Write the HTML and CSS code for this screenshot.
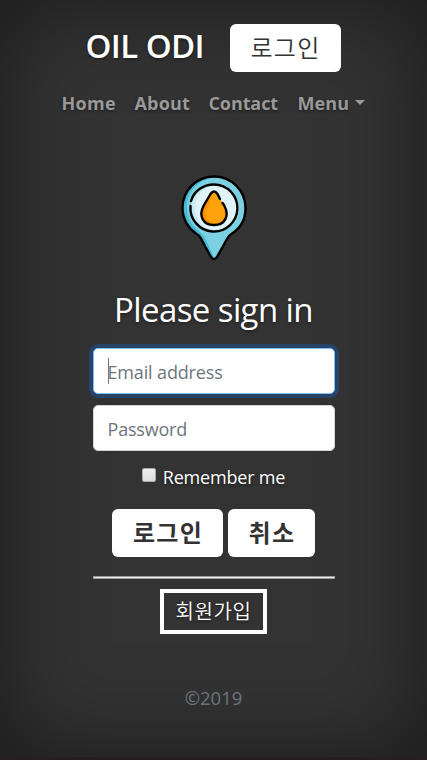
FILE: index.html
```html
<!DOCTYPE html>
<html lang="ko">
<head>
<meta charset="utf-8">
<meta name="viewport" content="width=device-width, initial-scale=1">
<title>OIL ODI</title>
<link rel="stylesheet" href="styles.css">
</head>
<body>
<div class="cover">
  <header class="masthead">
    <div class="brand-row">
      <h3 class="brand">OIL ODI</h3>
      <a class="btn btn-login" href="#">로그인</a>
    </div>
    <nav class="nav">
      <a class="nav-home" href="#">Home</a>
      <a class="nav-about" href="#">About</a>
      <a class="nav-contact" href="#">Contact</a>
      <a class="nav-menu" href="#">Menu</a>
      <span class="caret"></span>
    </nav>
  </header>
  <main class="signin">
    <svg class="logo" viewBox="0 0 66 86" fill="none">
      <path d="M33 1.500C15.600 1.500 1.500 15.500 1.500 33C1.500 44 7.500 53.500 15 58.500Q18 60 20 63.500L30 82Q33 86 36 82L46 64Q48 60 51 58.500C59.500 53 64.500 44 64.500 33C64.500 15.500 50.400 1.500 33 1.500Z" fill="#7bd0e2"/>
      <path d="M33 2.500C15 2.500 2 16 2 33C2 45 8 53 16 58Q19 60 21 63.500L30 81Q31 83 33 83L25 65Q22 59 18 56C10 50 6 43 6 32C6 17 17 5 33 2.500Z" fill="#46bad4"/>
      <circle cx="33" cy="33" r="23.500" fill="#c9eaf3"/>
      <path d="M35 10C21 13 14 21 14 33S22 54 35 56A23 23 0 0 0 35 10Z" fill="#e0f3f9"/>
      <path d="M33 16Q31 16 29 20L23 30C17 41 22 50 33 50S49 41 43 30L37 20Q35 16 33 16Z" fill="#ffa30d"/>
      <path d="M31 18L23 30C17 42 23 49 32 49C24 44 23 38 28 29Z" fill="#ff9100"/>
      <g stroke="#000" stroke-width="2.400" stroke-linecap="round" stroke-linejoin="round">
        <path d="M24.500 72L30 82Q33 86 36 82L46 64Q48 60 51 58.500C59.500 53 64.500 44 64.500 33C64.500 15.500 50.400 1.500 33 1.500S1.500 15.500 1.500 33C1.500 44 7.500 53.500 15 58.500Q18 60 20 63.500L23.500 70"/>
        <path d="M10 26C13 16 22 9.500 33 9.500A23.500 23.500 0 1 1 9.500 31"/>
        <path d="M39 24L36.500 19Q33 14 29.500 19L23 30C17 41 22 50 33 50S49 41 43 30L41.500 28"/>
      </g>
    </svg>
    <h1 class="title">Please sign in</h1>
    <div class="field focused"><i class="cursor"></i><span class="t-email">Email address</span></div>
    <div class="field"><span class="t-pass">Password</span></div>
    <label class="remember"><i class="box"></i><span>Remember me</span></label>
    <div class="actions">
      <a class="btn btn-submit" href="#">로그인</a>
      <a class="btn btn-cancel" href="#">취소</a>
    </div>
    <hr class="rule">
    <a class="join" href="#">회원가입</a>
  </main>
  <footer class="footer">©2019</footer>
</div>
</body>
</html>
```
FILE: styles.css
```css
* { box-sizing: border-box; }
body {
  margin: 0;
  height: 760px;
  overflow: hidden;
  background: #333;
  color: #fff;
  font: 19px/28px "Open Sans", "Noto Sans CJK KR", sans-serif;
  text-shadow: 0 1px 3px rgba(0, 0, 0, .5);
}
a { color: inherit; text-decoration: none; }
h1, h3 { margin: 0; }
.cover {
  height: 760px;
  padding-top: 24px;
  display: flex;
  flex-direction: column;
  align-items: center;
  box-shadow: inset 0 0 95px rgba(0, 0, 0, .5);
  border-bottom: 3px solid #241f22;
}
.masthead { display: flex; flex-direction: column; width: 304px; }
.brand-row { display: flex; height: 48px; padding-left: 24px; }
.brand { width: 144px; font-size: 33px; line-height: 44px; font-weight: 600; letter-spacing: -.6px; white-space: nowrap; }
.btn {
  height: 48px;
  padding: 0 0 2px 1px;
  display: flex;
  align-items: center;
  justify-content: center;
  border-radius: 6px;
  background: #fff;
  color: #333;
  font-family: "Noto Sans CJK KR", sans-serif;
  font-size: 24px;
  letter-spacing: 1.300px;
  text-shadow: none;
}
.btn-login { width: 111px; font-weight: 350; }
.nav { display: flex; margin-top: 17px; color: #999; font-weight: 700; font-size: 18px; white-space: nowrap; }
.nav-home { width: 73px; letter-spacing: .3px; }
.nav-about { width: 74px; letter-spacing: .2px; }
.nav-contact { width: 89px; letter-spacing: -.1px; }
.nav-menu { width: 57px; letter-spacing: .1px; }
.caret { margin-top: 11px; width: 0; height: 0; border: 5.500px solid transparent; border-top-color: #999; border-bottom: 0; }
.signin { width: 242px; margin-top: 58px; display: flex; flex-direction: column; align-items: center; }
.logo { width: 66px; height: 86px; }
.title { margin-top: 28px; height: 59px; font-size: 33px; line-height: 42px; font-weight: 400; letter-spacing: -.6px; white-space: nowrap; }
.field {
  width: 242px;
  height: 46px;
  padding: 2px 0 0 14px;
  display: flex;
  align-items: center;
  background: #fff;
  border: 1px solid #ced4da;
  border-radius: 5px;
  color: #6c757d;
  font-size: 18px;
  text-shadow: none;
}
.field + .field { margin-top: 11px; }
.focused { border-color: #80bdff; box-shadow: 0 0 0 4px #26436a; }
.cursor { width: 1px; height: 26px; margin: -2px -1px 0 0; background: #777; }
.t-email { letter-spacing: -.15px; }
.t-pass { letter-spacing: -.2px; }
.remember { display: flex; margin-top: 12px; height: 28px; font-size: 18px; letter-spacing: -.2px; white-space: nowrap; }
.box { width: 14px; height: 14px; margin: 5px 7px 0 0; border: 1px solid #aaa; border-radius: 2px; background: linear-gradient(#eee, #ddd); }
.actions { display: flex; gap: 5px; margin-top: 18px; font-weight: 700; }
.btn-submit { width: 111px; }
.btn-cancel { width: 87px; }
.rule { width: 242px; height: 3px; margin: 19px 0 10px; border: 1px solid #999; background: #eee; }
.join {
  width: 107px;
  height: 45px;
  border: 4px solid #fff;
  text-align: center;
  line-height: 35px;
  font-family: "Noto Sans CJK KR", sans-serif;
  font-size: 20px;
  font-weight: 350;
  letter-spacing: .6px;
}
.footer { margin-top: 50px; color: #6c757d; font-size: 18.500px; text-shadow: none; }
```
